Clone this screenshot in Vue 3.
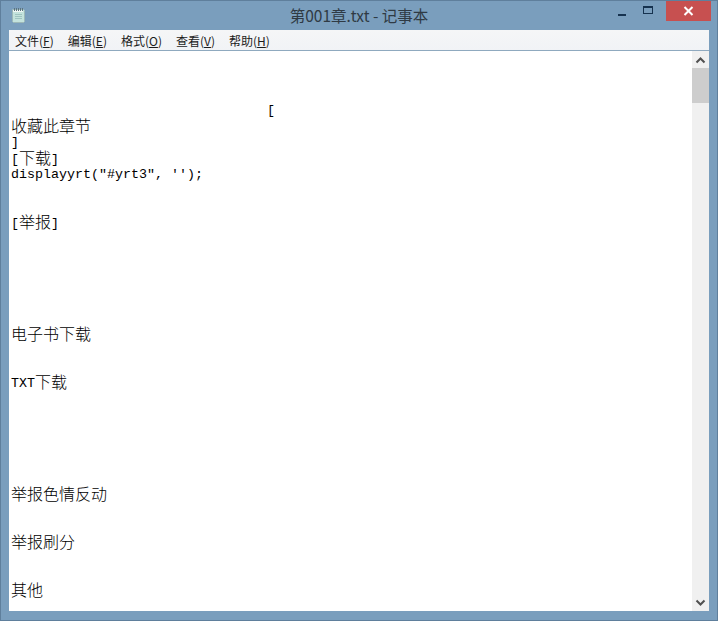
<script setup>
const menus = [
  { zh: '文件', key: 'F' },
  { zh: '编辑', key: 'E' },
  { zh: '格式', key: 'O' },
  { zh: '查看', key: 'V' },
  { zh: '帮助', key: 'H' }
]
const pad = ' '.repeat(32)
const lines = [
  '', '', '',
  [['l', pad + '[']],
  [['z', '收藏此章节']],
  [['l', ']']],
  [['l', '['], ['z', '下载'], ['l', ']']],
  [['l', 'displayyrt("#yrt3", \'\');']],
  '', '',
  [['l', '['], ['z', '举报'], ['l', ']']],
  '', '', '', '', '', '',
  [['z', '电子书下载']],
  '', '',
  [['l', 'TXT'], ['z', '下载']],
  '', '', '', '', '', '',
  [['z', '举报色情反动']],
  '', '',
  [['z', '举报刷分']],
  '', '',
  [['z', '其他']]
]
</script>

<template>
  <div class="window">
    <header class="titlebar">
      <div class="tb-left">
        <svg class="app-icon" width="15" height="15" viewBox="0 0 15 15">
          <path d="M1.5 1.5h11l1 1v11l-1 1h-10l-1-1z" fill="#c4e3dd" stroke="#9db8b8" stroke-width="1" />
          <path d="M2 2h10v2H2z" fill="#eef6f3" />
          <path d="M3.5 0v3M5.5 0v3M7.5 0v3M9.5 0v3M11.5 0v3" stroke="#5d7480" stroke-width="1" />
          <path d="M4 6.5h7M4 8.5h7M4 10.5h7" stroke="#9fc4c0" stroke-width="1" />
        </svg>
      </div>
      <div class="title">第001章.txt - 记事本</div>
      <div class="controls">
        <div class="ctl"><span class="min"></span></div>
        <div class="ctl"><span class="max"></span></div>
        <div class="close">
          <svg width="11" height="10" viewBox="0 0 11 10">
            <path d="M1.5 1l8 8M9.5 1l-8 8" stroke="#fff" stroke-width="2" />
          </svg>
        </div>
      </div>
    </header>
    <nav class="menubar">
      <span v-for="m in menus" :key="m.key" class="menu">{{ m.zh }}(<u>{{ m.key }}</u>)</span>
    </nav>
    <main class="client">
      <div class="text">
        <div v-for="(line, i) in lines" :key="i" class="line"><template v-if="line"><span v-for="(s, j) in line" :key="j" :class="s[0]">{{ s[1] }}</span></template></div>
      </div>
      <aside class="scrollbar">
        <div class="arrow">
          <svg width="11" height="8" viewBox="0 0 11 8"><path d="M1.5 6.5l4-4 4 4" fill="none" stroke="#505050" stroke-width="2" /></svg>
        </div>
        <div class="track">
          <div class="thumb"></div>
        </div>
        <div class="arrow">
          <svg width="11" height="8" viewBox="0 0 11 8"><path d="M1.5 1.5l4 4 4-4" fill="none" stroke="#505050" stroke-width="2" /></svg>
        </div>
      </aside>
    </main>
  </div>
</template>

<style scoped>
.window {
  width: 718px;
  height: 621px;
  box-sizing: border-box;
  background: #7a9ebd;
  border: 1px solid #5f7f9c;
  padding: 0 8px 9px;
  display: flex;
  flex-direction: column;
  overflow: hidden;
}
.titlebar {
  height: 29px;
  flex: none;
  display: grid;
  grid-template-columns: 1fr auto 1fr;
  align-items: start;
}
.tb-left {
  padding: 7px 0 0 2px;
}
.app-icon {
  display: block;
}
.title {
  font-family: "Noto Sans CJK SC", "Liberation Sans", sans-serif;
  font-size: 15.5px;
  line-height: 29px;
  color: #2f3a44;
}
.controls {
  display: flex;
  justify-content: flex-end;
  margin-right: -2px;
}
.ctl {
  width: 26px;
  height: 20px;
  position: relative;
  display: flex;
  align-items: center;
  justify-content: center;
}
.min {
  width: 8px;
  height: 2px;
  background: #16324f;
  margin-top: 7px;
}
.max {
  width: 10px;
  height: 8px;
  box-sizing: border-box;
  border: 1px solid #16324f;
  border-top-width: 2px;
  margin-top: -3px;
}
.close {
  width: 45px;
  height: 20px;
  background: #c75050;
  display: flex;
  align-items: center;
  justify-content: center;
  margin-left: 5px;
}
.menubar {
  height: 20px;
  flex: none;
  background: linear-gradient(#f5f6f7, #f1f3f6);
  display: flex;
  align-items: center;
  padding-left: 6px;
  gap: 14px;
  border-bottom: 1px solid #8fa9bf;
  font-family: "Noto Sans CJK SC", "Liberation Sans", sans-serif;
  font-size: 12px;
  color: #1c1c1c;
}
.menu {
  white-space: nowrap;
}
.client {
  flex: 1;
  min-height: 0;
  background: #fff;
  display: flex;
}
.text {
  flex: 1;
  min-width: 0;
  overflow: hidden;
  padding: 2px 0 0 2px;
  color: #000;
}
.line {
  height: 16px;
  line-height: 16px;
  white-space: pre;
}
.l {
  font-family: "Liberation Mono", monospace;
  font-size: 13.33px;
}
.z {
  font-family: "Noto Sans CJK SC", sans-serif;
  font-size: 16px;
  font-weight: 300;
  vertical-align: -1px;
}
.scrollbar {
  width: 17px;
  flex: none;
  background: #f0f0f0;
  display: flex;
  flex-direction: column;
}
.arrow {
  height: 17px;
  flex: none;
  display: flex;
  align-items: center;
  justify-content: center;
}
.track {
  flex: 1;
  min-height: 0;
}
.thumb {
  height: 35px;
  background: #cdcdcd;
}
</style>

<style>
html, body {
  margin: 0;
  background: #7a9ebd;
}
</style>
